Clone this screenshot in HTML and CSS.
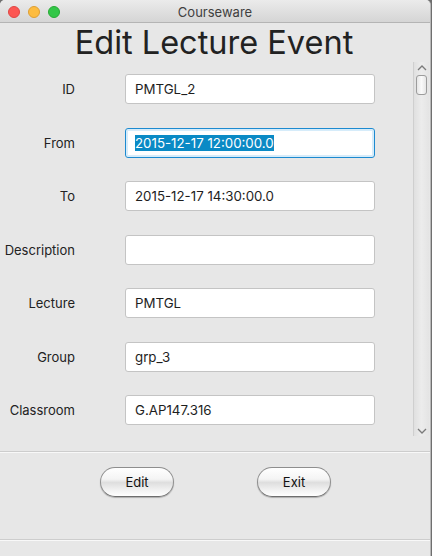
FILE: index.html
```html
<!DOCTYPE html>
<html>
<head>
<meta charset="utf-8">
<link rel="stylesheet" href="styles.css">
</head>
<body>
<div class="window">
  <div class="titlebar">
    <div class="lights">
      <span class="light red"></span>
      <span class="light yellow"></span>
      <span class="light green"></span>
    </div>
    <div class="wtitle">Courseware</div>
  </div>
  <h1 class="heading">Edit Lecture Event</h1>
  <div class="pane">
    <div class="form">
      <div class="row"><label class="lbl">ID</label><div class="field">PMTGL_2</div></div>
      <div class="row"><label class="lbl">From</label><div class="field focused"><span class="sel">2015-12-17 12:00:00.0</span></div></div>
      <div class="row"><label class="lbl">To</label><div class="field">2015-12-17 14:30:00.0</div></div>
      <div class="row"><label class="lbl">Description</label><div class="field"></div></div>
      <div class="row"><label class="lbl">Lecture</label><div class="field">PMTGL</div></div>
      <div class="row"><label class="lbl">Group</label><div class="field">grp_3</div></div>
      <div class="row"><label class="lbl">Classroom</label><div class="field">G.AP147.316</div></div>
    </div>
    <div class="scrollbar">
      <svg class="arrow" width="16" height="10" viewBox="0 0 16 10"><path d="M4 7 L8 3 L12 7" fill="none" stroke="#7a7a7a" stroke-width="1.3"/></svg>
      <div class="thumb"></div>
      <div class="track"></div>
      <svg class="arrow" width="16" height="10" viewBox="0 0 16 10"><path d="M4 3 L8 7 L12 3" fill="none" stroke="#7a7a7a" stroke-width="1.3"/></svg>
    </div>
  </div>
  <div class="spacer"></div>
  <div class="buttons">
    <button class="btn">Edit</button>
    <button class="btn">Exit</button>
  </div>
  <div class="footer"></div>
</div>
</body>
</html>
```
FILE: styles.css
```css
html, body {
  margin: 0;
  padding: 0;
  background: #6f6f6f;
  font-family: Inter, "Liberation Sans", Arial, sans-serif;
}
.window {
  width: 430px;
  height: 556px;
  background: #e7e7e7;
  border-right: 1px solid #b8b8b8;
  border-top-right-radius: 5px;
  border-top-left-radius: 5px;
  overflow: hidden;
  display: flex;
  flex-direction: column;
}
.titlebar {
  height: 22px;
  flex: none;
  background: linear-gradient(#ebebeb, #d5d5d5);
  border-bottom: 1px solid #b4b4b4;
  position: relative;
  display: flex;
  align-items: center;
  justify-content: center;
}
.lights {
  position: absolute;
  left: 8px;
  top: 6px;
  display: flex;
  gap: 8px;
}
.light {
  width: 12px;
  height: 12px;
  border-radius: 50%;
  box-sizing: border-box;
}
.red { background: #fc5753; border: 1px solid #df4744; }
.yellow { background: #fdbc40; border: 1px solid #de9f34; }
.green { background: #33c748; border: 1px solid #27aa35; }
.wtitle {
  font-size: 13px;
  color: #404040;
  margin-top: 1px;
}
.heading {
  margin: 0;
  height: 39px;
  flex: none;
  font-weight: normal;
  font-size: 32.5px;
  line-height: 39px;
  color: #222;
  text-align: center;
  padding-right: 2px;
}
.pane {
  height: 374px;
  flex: none;
  display: flex;
}
.form {
  flex: 1;
  padding-top: 12px;
  display: flex;
  flex-direction: column;
  gap: 23.5px;
}
.row {
  display: flex;
  align-items: center;
  height: 30px;
}
.lbl {
  width: 75px;
  text-align: right;
  font-size: 13px;
  color: #222;
  margin-right: 50px;
}
.field {
  width: 250px;
  height: 30px;
  box-sizing: border-box;
  background: #fff;
  border: 1px solid #c4c4c4;
  border-radius: 3px;
  font-size: 13.3px;
  color: #1e1e1e;
  padding-left: 9px;
  display: flex;
  align-items: center;
}
.field.focused {
  border: 1px solid #1d8ad0;
  box-shadow: inset 0 0 0 2px #d6ecfa;
}
.sel {
  background: #0a8ac5;
  color: #fff;
  line-height: 16px;
}
.scrollbar {
  width: 15px;
  flex: none;
  margin-right: 1px;
  background: linear-gradient(90deg, #e0e0e0, #ececec 50%, #e4e4e4);
  border-left: 1px solid #cfcfcf;
  display: flex;
  flex-direction: column;
  align-items: center;
}
.arrow {
  flex: none;
  margin-top: 1px;
}
.thumb {
  width: 11px;
  height: 20px;
  box-sizing: border-box;
  border: 1px solid #9c9c9c;
  border-radius: 3px;
  background: linear-gradient(90deg, #e6e6e6, #fafafa 50%, #e6e6e6);
  margin-top: 2px;
}
.track { flex: 1; }
.spacer {
  height: 15px;
  flex: none;
  border-bottom: 1px solid #cdcdcd;
}
.buttons {
  height: 88px;
  flex: none;
  border-top: 1px solid #f8f8f8;
  border-bottom: 1px solid #cdcdcd;
  display: flex;
  gap: 83px;
  padding-left: 100px;
  padding-top: 14px;
  box-sizing: border-box;
}
.btn {
  width: 74px;
  height: 30px;
  border-radius: 15px;
  border: 1px solid #8e8e8e;
  border-bottom-color: #6e6e6e;
  background: linear-gradient(#ffffff 0%, #f4f4f4 40%, #dedede 52%, #f2f2f2 80%, #ffffff 100%);
  box-shadow: 0 1px 1px rgba(0,0,0,0.25);
  font-family: Inter, "Liberation Sans", Arial, sans-serif;
  font-size: 13px;
  color: #111;
  padding: 0;
}
.footer {
  flex: 1;
  border-top: 1px solid #f8f8f8;
}
```
